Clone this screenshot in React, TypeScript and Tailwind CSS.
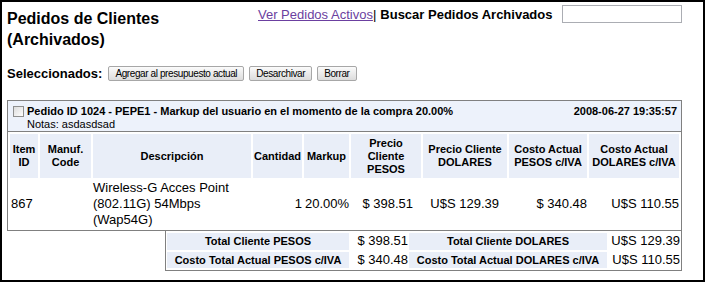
const HEAD: { lines: string[]; w: string }[] = [
  { lines: ['Item', 'ID'], w: 'w-[28px]' },
  { lines: ['Manuf.', 'Code'], w: 'w-[51px]' },
  { lines: ['Descripción'], w: 'w-[158px]' },
  { lines: ['Cantidad'], w: 'w-[49px]' },
  { lines: ['Markup'], w: 'w-[45px]' },
  { lines: ['Precio', 'Cliente', 'PESOS'], w: 'w-[70px]' },
  { lines: ['Precio Cliente', 'DOLARES'], w: 'w-[84px]' },
  { lines: ['Costo Actual', 'PESOS c/IVA'], w: 'w-[78px]' },
  { lines: ['Costo Actual', 'DOLARES c/IVA'], w: 'w-auto' },
];

function Btn({ children }: { children: React.ReactNode }) {
  return (
    <button className="h-[15px] px-[6px] border border-[#a7a7a7] rounded-[2px] bg-gradient-to-b from-[#fbfbfb] to-[#dcdcdc] text-[10px] leading-[13px] tracking-[-0.4px] text-black">
      {children}
    </button>
  );
}

export default function App() {
  return (
    <div className="w-[705px] h-[282px] border-2 border-black bg-white text-black font-['Liberation_Sans',Arial,sans-serif] overflow-hidden">
      {/* top */}
      <div className="flex">
        <h1 className="w-[256px] pl-[5px] pt-[6px] text-[16px] leading-[21px] font-bold">
          Pedidos de Clientes
          <br />
          (Archivados)
        </h1>
        <div className="mt-[3px] flex items-center h-[18px] text-[13px] leading-[15px]">
          <a href="#" className="text-[#6b3fa0] underline">
            Ver Pedidos Activos
          </a>
          <span>|</span>
          <span className="ml-[4px] font-bold">Buscar Pedidos Archivados</span>
          <input className="ml-[10px] w-[120px] h-[18px] border border-[#abadb3] bg-white" />
        </div>
      </div>

      {/* bulk actions */}
      <div className="mt-[16px] pl-[5px] flex items-center gap-[5px] h-[15px]">
        <span className="text-[13px] leading-[15px] font-bold mr-[1px]">Seleccionados:</span>
        <Btn>Agregar al presupuesto actual</Btn>
        <Btn>Desarchivar</Btn>
        <Btn>Borrar</Btn>
      </div>

      {/* order */}
      <div className="ml-[5px] mt-[19px] w-[675px] flex flex-col items-end">
        <div className="w-full border border-[#808080]">
          <div className="bg-[#edf2fb] border-b border-[#808080] pl-[5px] pr-[4px] pt-[4px] text-[11px] leading-[13px]">
            <div className="flex items-center">
              <span className="w-[11px] h-[11px] mr-[3px] border border-[#8e8f8f] bg-gradient-to-br from-[#dcdcdc] to-[#ffffff]" />
              <span className="font-bold">
                Pedido ID 1024 - PEPE1 - Markup del usuario en el momento de la compra 20.00%
              </span>
              <span className="ml-auto font-bold">2008-06-27 19:35:57</span>
            </div>
            <div className="pl-[14px]">Notas: asdasdsad</div>
          </div>
          <table className="w-full table-fixed border-separate border-spacing-[2px]">
            <thead>
              <tr>
                {HEAD.map((h, i) => (
                  <th
                    key={i}
                    className={`${h.w} h-[44px] p-0 bg-[#e9eef8] text-[11px] leading-[13px] font-bold text-center align-middle`}
                  >
                    {h.lines.map((l, j) => (
                      <div key={j}>{l}</div>
                    ))}
                  </th>
                ))}
              </tr>
            </thead>
            <tbody className="text-[13px] leading-[16px]">
              <tr>
                <td className="h-[48px] p-0 pl-[1px] align-middle">867</td>
                <td className="p-0" />
                <td className="p-0 align-middle">
                  Wireless-G Acces Point
                  <br />
                  (802.11G) 54Mbps
                  <br />
                  (Wap54G)
                </td>
                <td className="p-0 text-right align-middle">1</td>
                <td className="p-0 pl-[1px] align-middle">20.00%</td>
                <td className="p-0 pr-[8px] text-right align-middle">$ 398.51</td>
                <td className="p-0 text-right pr-[8px] align-middle">U$S 129.39</td>
                <td className="p-0 text-right align-middle">$ 340.48</td>
                <td className="p-0 text-right align-middle">U$S 110.55</td>
              </tr>
            </tbody>
          </table>
        </div>

        {/* totals */}
        <table className="w-[517px] table-fixed border-separate border-spacing-x-[1px] border-spacing-y-[2px] border-x border-b border-[#808080]">
          <tbody>
            <tr>
              <td className="w-[182px] h-[16px] p-0 bg-[#e9eef8] text-[11px] font-bold text-center">Total Cliente PESOS</td>
              <td className="w-[58px] p-0 text-[13px] leading-[16px] text-right">$ 398.51</td>
              <td className="w-[198px] p-0 bg-[#e9eef8] text-[11px] font-bold text-center">Total Cliente DOLARES</td>
              <td className="p-0 text-[13px] leading-[16px] text-right">U$S 129.39</td>
            </tr>
            <tr>
              <td className="h-[16px] p-0 bg-[#e9eef8] text-[11px] font-bold text-center">Costo Total Actual PESOS c/IVA</td>
              <td className="p-0 text-[13px] leading-[16px] text-right">$ 340.48</td>
              <td className="p-0 bg-[#e9eef8] text-[11px] font-bold text-center">Costo Total Actual DOLARES c/IVA</td>
              <td className="p-0 text-[13px] leading-[16px] text-right">U$S 110.55</td>
            </tr>
          </tbody>
        </table>
      </div>
    </div>
  );
}
